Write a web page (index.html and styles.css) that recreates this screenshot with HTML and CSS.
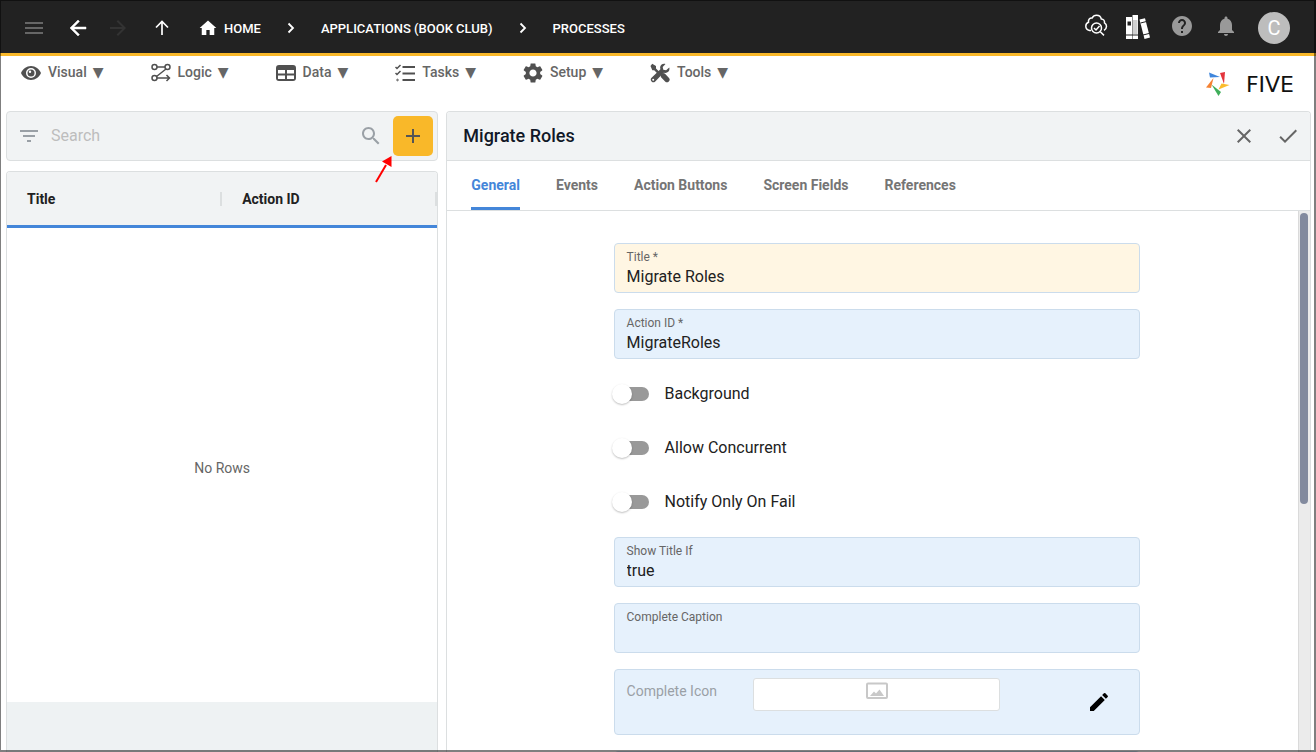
FILE: index.html
```html
<!DOCTYPE html>
<html lang="en">
<head>
<meta charset="utf-8">
<title>Five - Processes</title>
<link rel="stylesheet" href="styles.css">
</head>
<body>
<div class="app">
  <header class="topbar">
    <div class="nav-buttons">
      <button class="icon-button dim" aria-label="Menu"><svg width="24" height="24" viewBox="0 0 24 24"><path d="M3 18h18v-2H3zm0-5h18v-2H3zm0-7v2h18V6z"/></svg></button>
      <button class="icon-button" aria-label="Back"><svg width="24" height="24" viewBox="0 0 24 24"><path d="M20 11H7.830l5.590-5.590L12 4l-8 8 8 8 1.410-1.410L7.830 13H20z" stroke="currentColor" stroke-width=".5"/></svg></button>
      <button class="icon-button off" aria-label="Forward" disabled><svg width="24" height="24" viewBox="0 0 24 24"><path d="M12 4l-1.410 1.410L16.170 11H4v2h12.170l-5.580 5.590L12 20l8-8z"/></svg></button>
      <button class="icon-button" aria-label="Up"><svg width="24" height="24" viewBox="0 0 24 24" class="line"><path d="M12 19V6M6 11.500l6-6 6 6" stroke-width="1.700"/></svg></button>
    </div>
    <nav class="crumbs" aria-label="Breadcrumb">
      <a href="#" class="crumb"><svg width="20" height="20" viewBox="0 0 24 24"><path d="M10 20.500v-6h4v6h5.500V12H22L12 3 2 12h2.500v8.500z"/></svg>HOME</a>
      <svg class="line chevron" width="8" height="12" viewBox="0 0 8 12"><path d="M1.500 1.500L6 6l-4.500 4.500" stroke-width="1.800"/></svg>
      <a href="#" class="crumb">APPLICATIONS (BOOK CLUB)</a>
      <svg class="line chevron" width="8" height="12" viewBox="0 0 8 12"><path d="M1.500 1.500L6 6l-4.500 4.500" stroke-width="1.800"/></svg>
      <a href="#" class="crumb">PROCESSES</a>
    </nav>
    <div class="tools">
      <button class="icon-button cloud" aria-label="Cloud inspect"><svg class="line" width="24" height="24" viewBox="0 0 24 24"><path stroke-width="1.500" d="M7 17.500H5.500C3.300 17 1.800 15.300 1.800 13.200c0-1.800 1-3.200 2.700-3.900C4 6.500 5.800 4.700 8.200 5c.8-1.800 2.500-2.800 4.300-2.800 2.400 0 4.300 1.500 4.800 3.800 2.300.1 3.500 1.600 3.200 3.800 1.300.8 2 2 2 3.500 0 1.800-1 3.200-2.500 4"/><circle cx="12.500" cy="15" r="5" stroke-width="1.500"/><path stroke-width="1.500" d="M10 15l2 2 3.500-4M16.300 18.700l3.700 3.700"/></svg></button>
      <button class="icon-button books" aria-label="Library"><svg width="26" height="26" viewBox="0 0 26 26"><path d="M2 3h6v22H2zM8.500 1h5.500v24H8.500z"/><path d="M15.500 5.500l5.500-1.300 5 19.300-5.500 1.500z"/><path d="M3.500 7.500h3.500v4H3.500zM2 20.500h12v1H2z" fill="#222"/><path d="M9 6h4.500v14H9z" fill="#cfcfcf"/><path d="M16.500 9l6-1.500M19 21l6-1.500" stroke="#222"/></svg></button>
      <button class="icon-button soft" aria-label="Help"><svg width="24" height="24" viewBox="0 0 24 24"><path d="M12 2C6.480 2 2 6.480 2 12s4.480 10 10 10 10-4.480 10-10S17.520 2 12 2m1 17h-2v-2h2zm2.070-7.750-.9.920C13.450 12.900 13 13.500 13 15h-2v-.5c0-1.100.45-2.100 1.170-2.830l1.240-1.260c.37-.36.590-.86.590-1.410 0-1.100-.9-2-2-2s-2 .9-2 2H8c0-2.210 1.790-4 4-4s4 1.790 4 4c0 .88-.36 1.680-.93 2.250"/></svg></button>
      <button class="icon-button soft" aria-label="Notifications"><svg width="24" height="24" viewBox="0 0 24 24"><path d="M12 22c1.100 0 2-.9 2-2h-4c0 1.100.89 2 2 2m6-6v-5c0-3.070-1.640-5.640-4.500-6.320V4c0-.83-.67-1.500-1.500-1.500s-1.500.67-1.500 1.500v.68C7.630 5.360 6 7.920 6 11v5l-2 2v1h16v-1z"/></svg></button>
      <button class="avatar" aria-label="Account">C</button>
    </div>
  </header>

  <div class="menubar">
    <nav class="menu" aria-label="Main">
      <button class="menu-item"><svg width="20" height="20" viewBox="0 0 20 20"><path fill-rule="evenodd" d="M10 3C5.500 3 1.700 5.900 0 10c1.700 4.100 5.500 7 10 7s8.300-2.900 10-7c-1.700-4.100-5.500-7-10-7zm0 12a5 5 0 1 1 0-10 5 5 0 0 1 0 10z"/><circle cx="10" cy="10" r="3.500"/><circle cx="9" cy="8.800" r="1.200" fill="#fff"/></svg><span>Visual</span><span class="caret">▼</span></button>
      <button class="menu-item"><svg class="line" width="20" height="20" viewBox="0 0 20 20"><g stroke-width="1.500"><circle cx="3.500" cy="4" r="2.500"/><circle cx="16.500" cy="4" r="2.500"/><circle cx="3.500" cy="15" r="2.500"/><path d="M6 4h8M15 6L5.500 13.500M6 15h12M15.500 12l3 3-3 3"/></g></svg><span>Logic</span><span class="caret">▼</span></button>
      <button class="menu-item"><svg width="20" height="20" viewBox="0 0 20 20"><path fill-rule="evenodd" d="M3 2h14a3 3 0 0 1 3 3v10a3 3 0 0 1-3 3H3a3 3 0 0 1-3-3V5a3 3 0 0 1 3-3zM2 7v3.500h7V7zm9 0v3.500h7V7zM2 12.500V16h7v-3.500zm9 0V16h7v-3.500z"/></svg><span>Data</span><span class="caret">▼</span></button>
      <button class="menu-item"><svg class="line" width="20" height="20" viewBox="0 0 20 20"><path stroke-width="2" d="M7.500 4H20M7.500 10.500H20M7.500 17H20"/><path stroke-width="1.500" d="M.5 4L2 5.500 5.500 2M.5 10L2 11.500 5.500 8"/><circle cx="2.500" cy="17" r=".8"/></svg><span>Tasks</span><span class="caret">▼</span></button>
      <button class="menu-item"><svg width="20" height="20" viewBox="2 2 20 20"><path d="M19.140 12.940c.04-.3.060-.61.060-.94s-.02-.64-.07-.94l2.030-1.580c.18-.14.230-.41.120-.61l-1.920-3.320c-.12-.22-.37-.29-.59-.22l-2.390.96c-.5-.38-1.030-.7-1.620-.94l-.36-2.540c-.04-.24-.24-.41-.48-.41h-3.840c-.24 0-.43.170-.47.410l-.36 2.540c-.59.240-1.130.570-1.620.940l-2.390-.96c-.22-.08-.47 0-.59.220L2.740 8.870c-.12.210-.08.470.120.610l2.030 1.580c-.05.300-.09.630-.09.940s.02.640.070.940l-2.030 1.580c-.18.140-.23.410-.12.610l1.920 3.320c.12.220.370.290.590.220l2.390-.96c.5.380 1.030.7 1.620.940l.36 2.540c.05.240.24.410.48.410h3.840c.24 0 .44-.17.470-.41l.36-2.540c.59-.24 1.130-.56 1.620-.94l2.390.96c.22.080.47 0 .59-.22l1.920-3.320c.12-.22.070-.47-.12-.61zM12 15.600c-1.980 0-3.600-1.620-3.600-3.600s1.620-3.600 3.600-3.600 3.600 1.620 3.600 3.600-1.620 3.600-3.600 3.600"/></svg><span>Setup</span><span class="caret">▼</span></button>
      <button class="menu-item"><svg width="20" height="20" viewBox="0 0 20 20"><path d="M2.200.8L6 3v2.500l4 4-1.800 1.800-4-4H2.300L.5 3z"/><path d="M11 11.500l2-1.500 1.800.5 4 4.200a2.600 2.600 0 0 1-3.700 3.700l-4.300-4.300z"/><path d="M19.300 4.500l-3.200 2.800-2.800-.6-.6-2.600L15.500.9c-2.800-.8-5.300 1-5.400 3.600l.3 1.700L1.300 15a2.700 2.700 0 0 0 3.700 3.800l8.700-9 1.700.2c2.700 0 4.700-2.500 3.900-5.500z"/><circle cx="3.200" cy="16.800" r="1" fill="#fff"/></svg><span>Tools</span><span class="caret">▼</span></button>
    </nav>
    <div class="brand">
      <svg width="24" height="24" viewBox="0 0 24 24"><path fill="#3f86dc" d="M3 .5l11 4.500-10 .500z"/><path fill="#e3343c" d="M14 1l5-1-1 12z"/><path fill="#fbbc2c" d="M23.500 13l-11 4.500 3-6z"/><path fill="#3fae5a" d="M5.500 12.500L15 20l-2.500 4z"/><path fill="#f58233" d="M7.500 6L5 16l-5-.5z"/></svg>
      <span>FIVE</span>
    </div>
  </div>

  <main class="workspace">
    <section class="list-side">
      <div class="search">
        <svg class="filter" width="24" height="24" viewBox="0 0 24 24"><path d="M10 18h4v-2h-4zM3 6v2h18V6zm3 7h12v-2H6z"/></svg>
        <input type="search" placeholder="Search" aria-label="Search">
        <svg class="lens" width="24" height="24" viewBox="0 0 24 24"><path d="M15.500 14h-.79l-.28-.27C15.410 12.590 16 11.110 16 9.500 16 5.910 13.090 3 9.500 3S3 5.910 3 9.500 5.910 16 9.500 16c1.610 0 3.090-.59 4.230-1.570l.27.280v.79l5 4.990L20.490 19zm-6 0C7.010 14 5 11.990 5 9.500S7.010 5 9.500 5 14 7.010 14 9.500 11.990 14 9.500 14"/></svg>
        <button class="add" aria-label="Add"><svg width="24" height="24" viewBox="0 0 24 24"><path d="M19 13h-6v6h-2v-6H5v-2h6V5h2v6h6z"/></svg></button>
        <svg class="pointer" width="20" height="30" viewBox="0 0 20 30"><path d="M2 28L12 11" stroke="#f00" stroke-width="2"/><path d="M17.500 2v11L8 7.500z" fill="#f00"/></svg>
      </div>
      <div class="grid">
        <table>
          <thead><tr><th scope="col"><div>Title</div></th><th scope="col"><div>Action ID</div></th></tr></thead>
        </table>
        <div class="empty">No Rows</div>
        <div class="grid-footer"></div>
      </div>
    </section>

    <section class="detail">
      <div class="detail-head">
        <h1>Migrate Roles</h1>
        <button class="icon-button" aria-label="Cancel"><svg width="24" height="24" viewBox="0 0 24 24"><path d="M19 6.410 17.590 5 12 10.590 6.410 5 5 6.410 10.590 12 5 17.590 6.410 19 12 13.410 17.590 19 19 17.590 13.410 12z"/></svg></button>
        <button class="icon-button" aria-label="Save"><svg width="24" height="24" viewBox="0 0 24 24"><path d="M9 16.200 4.800 12l-1.400 1.400L9 19 21 7l-1.400-1.400z"/></svg></button>
      </div>
      <div class="tabs" role="tablist">
        <button role="tab" aria-selected="true" class="tab active">General</button>
        <button role="tab" class="tab">Events</button>
        <button role="tab" class="tab">Action Buttons</button>
        <button role="tab" class="tab">Screen Fields</button>
        <button role="tab" class="tab">References</button>
      </div>
      <div class="detail-body">
        <form class="form">
          <div class="field required"><label for="title">Title *</label><input id="title" type="text" value="Migrate Roles"></div>
          <div class="field"><label for="action">Action ID *</label><input id="action" type="text" value="MigrateRoles"></div>
          <label class="toggle"><input type="checkbox" role="switch"><span>Background</span></label>
          <label class="toggle"><input type="checkbox" role="switch"><span>Allow Concurrent</span></label>
          <label class="toggle"><input type="checkbox" role="switch"><span>Notify Only On Fail</span></label>
          <div class="field"><label for="show">Show Title If</label><input id="show" type="text" value="true"></div>
          <div class="field"><label for="caption">Complete Caption</label><input id="caption" type="text"></div>
          <div class="icon-field">
            <span>Complete Icon</span>
            <div class="preview"><svg width="24" height="24" viewBox="0 0 24 24"><rect x="2" y="4.500" width="20" height="14.500" rx="1" fill="none" stroke="#c8c8c8" stroke-width="2"/><path fill="#c8c8c8" d="M5 17l4-4.500 2 2 3.500-4L19 17z"/></svg></div>
            <button type="button" class="icon-button edit" aria-label="Edit icon"><svg width="24" height="24" viewBox="0 0 24 24"><path d="M3 17.250V21h3.750L17.810 9.940l-3.750-3.750zM20.710 7.040c.39-.39.390-1.020 0-1.410l-2.340-2.340a1 1 0 0 0-1.410 0l-1.830 1.830 3.750 3.750z"/></svg></button>
          </div>
          <div class="field"></div>
        </form>
        <div class="scrollbar"><div class="thumb"></div></div>
      </div>
    </section>
  </main>
</div>
</body>
</html>
```
FILE: styles.css
```css
* { box-sizing: border-box; }
body { margin: 0; background: #fff; font-family: Roboto, "Liberation Sans", sans-serif; font-size: 14px; color: #212121; }
button { margin: 0; padding: 0; border: 0; background: none; font: inherit; color: inherit; cursor: pointer; }
svg { display: block; flex: none; fill: currentColor; }
.line { fill: none; stroke: currentColor; }
.app { height: 100vh; display: flex; flex-direction: column; overflow: hidden; }
/* Window frame, drawn over the content */
.app::after { content: ""; position: fixed; inset: 0; border: 1px solid rgba(0, 0, 0, 0.5); border-right-width: 2px; border-bottom-width: 2px; pointer-events: none; }

.topbar { flex: none; height: 56px; padding: 0 26px 0 22px; display: flex; align-items: center; background: #222; border-bottom: 3px solid #f9b829; color: #fff; }
.nav-buttons { display: flex; gap: 20px; padding-top: 2px; }
.dim { color: #666; }
.off { margin-left: -4px; color: #333; }
.soft { color: #999; }
.crumbs { display: flex; align-items: center; gap: 26px; margin-left: 24px; padding-top: 3px; }
.crumb { display: flex; align-items: center; gap: 6px; color: #fff; font-size: 13px; font-weight: 500; text-decoration: none; }
.tools { display: flex; align-items: center; gap: 20px; margin-left: auto; }
.tools .icon-button { padding-bottom: 2px; }
.tools .cloud { margin-right: -4px; padding-bottom: 4px; }
.tools .books { padding-bottom: 0; }
.avatar { width: 32px; height: 32px; margin-top: 3px; border-radius: 50%; background: #bdbdbd; font-size: 20px; line-height: 32px; text-align: center; }

.menubar { flex: none; height: 55px; padding: 5px 22px 0 21px; display: flex; justify-content: space-between; }
.menu { display: flex; align-items: flex-start; gap: 47px; color: #555; }
.menu-item { display: flex; align-items: center; height: 22px; font-weight: 500; color: #666; }
.menu-item svg { margin: 2px 7px 0 0; color: #505050; }
.caret { margin-left: 6px; font-family: "DejaVu Sans", sans-serif; font-weight: 400; line-height: 16px; }
.brand { width: 88px; display: flex; align-items: center; justify-content: space-between; padding-bottom: 4px; font-family: "DejaVu Sans", sans-serif; font-size: 22px; color: #111; }

.workspace { flex: 1; min-height: 0; display: grid; grid-template-columns: 1fr 2fr; gap: 8px; padding: 0 5px 0 6px; }
.list-side { display: flex; flex-direction: column; gap: 10px; min-height: 0; }
.search { position: relative; flex: none; height: 50px; display: flex; align-items: center; padding: 0 4px 0 10px; background: #f1f3f4; border: 1px solid #dcdfe0; border-radius: 4px; color: #9aa0a6; }
.search input { flex: 1; min-width: 0; padding: 0 10px 2px; border: 0; background: none; font: inherit; font-size: 16px; outline: 0; }
.search input::placeholder { color: #bdbdbd; }
.add { width: 40px; height: 40px; margin-left: 10px; border-radius: 5px; background: #f9b829; color: #555; display: flex; align-items: center; justify-content: center; }
.pointer { position: absolute; right: 43px; top: 42px; }
.grid { flex: 1; min-height: 0; display: flex; flex-direction: column; border: 1px solid #dcdfe0; border-bottom: 0; border-radius: 4px 4px 0 0; overflow: hidden; }
table { width: 100%; table-layout: fixed; border-spacing: 0; background: #f1f3f4; border-bottom: 3px solid #4486d9; }
th { height: 53px; padding: 0; text-align: left; font-weight: 700; }
th div { height: 14px; padding-left: 20px; line-height: 14px; border-right: 2px solid #dcdfe0; }
.empty { flex: 1; display: flex; align-items: center; justify-content: center; padding-top: 6px; color: #666; }
.grid-footer { flex: none; height: 50px; background: #eef2f3; }

.detail { display: flex; flex-direction: column; min-width: 0; min-height: 0; border: 1px solid #dcdfe0; border-bottom: 0; border-radius: 4px 4px 0 0; overflow: hidden; }
.detail-head { flex: none; height: 49px; padding: 0 10px 0 16px; display: flex; align-items: center; gap: 20px; background: #f1f3f4; border-bottom: 1px solid #dcdfe0; color: #666; }
.detail-head h1 { flex: 1; margin: 0; padding-bottom: 2px; font-size: 18px; font-weight: 500; color: #111827; }
.tabs { flex: none; height: 50px; padding: 0 24px; display: flex; gap: 36px; border-bottom: 1px solid #dcdfe0; }
.tab { padding-bottom: 2px; border-bottom: 3px solid transparent; border-top: 3px solid transparent; font-weight: 700; color: #757575; }
.tab.active { color: #4486d9; border-bottom-color: #4486d9; }
.detail-body { flex: 1; min-height: 0; display: flex; justify-content: space-between; overflow: hidden; }
.form { width: 61%; margin: 0 auto; padding-top: 32px; display: flex; flex-direction: column; gap: 16px; position: relative; left: 4px; }
.field { flex: none; height: 50px; padding: 5px 12px; display: flex; flex-direction: column; background: #e6f1fc; border: 1px solid #cbdcec; border-radius: 4px; }
.field.required { background: #fff6e3; }
.field label { font-size: 12px; line-height: 16px; color: #666; }
.field input { height: 22px; padding: 0; border: 0; background: none; font: inherit; font-size: 16px; color: #212121; outline: 0; }
.toggle { flex: none; height: 38px; display: flex; align-items: center; gap: 16px; font-size: 16px; }
.toggle span { padding-bottom: 2px; }
.toggle input { appearance: none; position: relative; width: 35px; height: 14px; margin: 0; border-radius: 7px; background: #999; }
.toggle input::before { content: ""; position: absolute; left: -2px; top: -3px; width: 20px; height: 20px; border-radius: 50%; background: #fff; box-shadow: 0 1px 2px rgba(0, 0, 0, 0.25); }
.toggle input:checked::before { left: 17px; }
.icon-field { flex: none; height: 66px; display: grid; grid-template-columns: 1fr 47% 1fr; background: #e6f1fc; border: 1px solid #cbdcec; border-radius: 4px; }
.icon-field > span { padding: 13px 0 0 12px; color: #9aa0a6; }
.preview { height: 33px; margin-top: 8px; background: #fff; border: 1px solid #dcdfe0; border-radius: 3px; display: flex; justify-content: center; }
.edit { justify-self: end; align-self: center; margin-right: 28px; color: #000; }
.scrollbar { flex: none; width: 12px; padding: 2px 2px 0 1px; background: #ebebeb; border-left: 1px solid #dadada; }
.thumb { height: 54%; border-radius: 4px; background: #828a9e; }
```
